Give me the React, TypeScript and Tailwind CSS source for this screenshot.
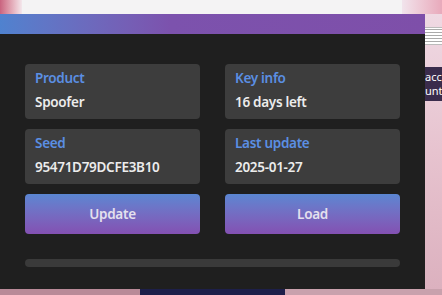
import React from "react";

const fields = [
  { label: "Product", value: "Spoofer" },
  { label: "Key info", value: "16 days left" },
  { label: "Seed", value: "95471D79DCFE3B10" },
  { label: "Last update", value: "2025-01-27" },
];

const InfoCard = ({ label, value }: { label: string; value: string }) => (
  <div className="h-[55px] rounded-[4px] bg-[#3d3d3d] px-[10px] pt-[5px]">
    <div className="text-[13.5px] leading-[18px] font-semibold tracking-[-0.3px] text-[#5b8fe3]">{label}</div>
    <div className="mt-[6px] text-[13.5px] leading-[18px] font-semibold tracking-[-0.3px] text-[#ececec]">{value}</div>
  </div>
);

const App = () => {
  return (
    <div
      className="flex h-[295px] w-[442px] flex-col overflow-hidden bg-[#e9c9d3]"
      style={{ fontFamily: '"Noto Sans", "Open Sans", sans-serif' }}
    >
      {/* desktop strip above the window */}
      <div className="flex h-[14px] shrink-0">
        <div className="w-[22px] bg-gradient-to-r from-[#c9637f] to-[#f3e7ec]" />
        <div className="flex-1 bg-[#f4f3f4]" />
        <div className="w-[40px] bg-gradient-to-r from-[#f1e4ec] to-[#e8a9bb]" />
      </div>

      <div className="flex h-[275px] shrink-0">
        {/* app window */}
        <div className="flex w-[425px] flex-col bg-[#1f1f1f]">
          <div className="h-[20px] bg-gradient-to-r from-[#4f82cf] via-[#7c52ad] via-40% to-[#7e4fa9]" />
          <div className="px-[25px] pt-[30px]">
            <div className="grid grid-cols-2 gap-x-[25px] gap-y-[10px]">
              {fields.map((f) => (
                <InfoCard key={f.label} label={f.label} value={f.value} />
              ))}
              <button className="h-[40px] rounded-[4px] bg-gradient-to-b from-[#5a86d2] to-[#8350b2] text-[13.5px] font-semibold tracking-[-0.3px] text-[#e4e0ee]">
                Update
              </button>
              <button className="h-[40px] rounded-[4px] bg-gradient-to-b from-[#5a86d2] to-[#8350b2] text-[13.5px] font-semibold tracking-[-0.3px] text-[#e4e0ee]">
                Load
              </button>
            </div>
            <div className="mt-[25px] h-[8px] rounded-full bg-[#3a3a3a]" />
          </div>
        </div>

        {/* desktop to the right */}
        <div className="flex w-[17px] flex-col overflow-hidden bg-gradient-to-b from-[#efd9e3] via-[#e7c3cf] to-[#dcb1bf]">
          <div className="mt-[13px] h-[18px] w-full border-y border-[#bbb] bg-[repeating-linear-gradient(0deg,#fff_0px,#fff_2px,#aaa_2px,#aaa_3px)]" />
          <div className="mt-[22px] h-[34px] overflow-hidden whitespace-nowrap bg-[#3a2c4c] pt-[3px] text-[11px] leading-[14px] text-white">
            <div>acc</div>
            <div>unt</div>
          </div>
          <div className="flex-1" />
        </div>
      </div>

      {/* desktop below */}
      <div className="flex flex-1">
        <div className="w-[140px] bg-[#b98a98]" />
        <div className="w-[145px] bg-[#1d1f4a]" />
        <div className="flex-1 bg-[#c9a1ad]" />
      </div>
    </div>
  );
};

export default App;
